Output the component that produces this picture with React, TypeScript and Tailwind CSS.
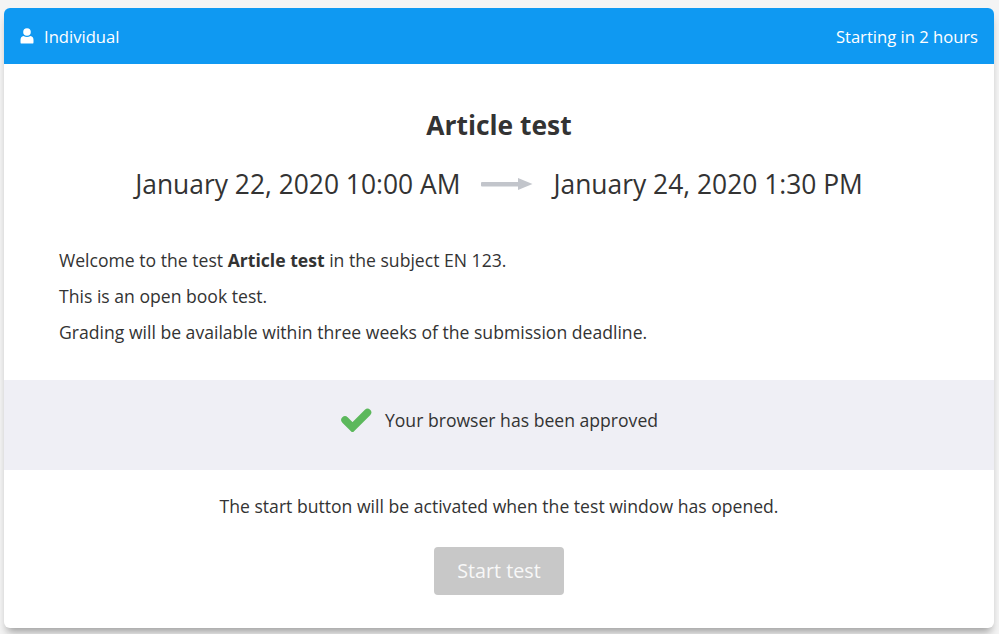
export default function App() {
  return (
    <div className="h-[634px] w-[999px] overflow-hidden bg-[#f4f4f4] pt-2 pl-1 pr-[5px] font-['Open_Sans',sans-serif] text-[#333]">
      <div className="h-[620px] rounded-[6px] bg-white shadow-[0_7px_8px_-3px_rgba(0,0,0,0.35)] flex flex-col">
        <div className="h-14 flex items-center justify-between rounded-t-[6px] bg-[#0f99f2] pl-4 pr-4 pt-[2px] text-[16.6px] text-white">
          <div className="flex items-center gap-[10px]">
            <svg width="14" height="16" viewBox="0 0 14 16" fill="white" className="-mt-[1px]">
              <circle cx="7" cy="4" r="3.8" />
              <path d="M1 15.5 Q0.5 15.5 0.5 14 V12 Q0.5 8.5 3.5 8 Q7 10 10.5 8 Q13.5 8.5 13.5 12 V14 Q13.5 15.5 13 15.5 Z" />
            </svg>
            <span>Individual</span>
          </div>
          <span>Starting in 2 hours</span>
        </div>
        <h1 className="mt-[44px] text-center text-[26.4px] leading-[34px] font-bold">Article test</h1>
        <div className="mt-[23px] flex items-center justify-center gap-5 text-[26.4px] leading-[38px]">
          <span>January 22, 2020 10:00 AM</span>
          <svg width="53" height="12" viewBox="0 0 53 12">
            <rect x="1" y="4" width="38" height="4.5" rx="1" fill="#c2c5cb" />
            <path d="M38 0 L52.5 6 L38 12 Z" fill="#c2c5cb" />
          </svg>
          <span>January 24, 2020 1:30 PM</span>
        </div>
        <div className="mt-[45px] px-[55px] text-[17.6px] leading-[24px] flex flex-col gap-3">
          <p>Welcome to the test <b>Article test</b> in the subject EN 123.</p>
          <p>This is an open book test.</p>
          <p>Grading will be available within three weeks of the submission deadline.</p>
        </div>
        <div className="mt-[36px] h-[90px] pb-[10px] flex items-center justify-center gap-[13px] bg-[#efeff5] text-[17.6px]">
          <svg width="32" height="24" viewBox="0 0 32 24">
            <path d="M5 12 L12.5 19.5 L27.5 4.5" fill="none" stroke="#5cb85c" strokeWidth="7.5" strokeLinecap="round" strokeLinejoin="miter" />
          </svg>
          <span>Your browser has been approved</span>
        </div>
        <p className="mt-[24px] text-center text-[17.6px] leading-[24px]">The start button will be activated when the test window has opened.</p>
        <div className="mt-[29px] flex justify-center">
          <button className="h-12 w-[130px] rounded-[4px] bg-[#c8c8c8] text-[19.7px] text-[#f8f8f8]">Start test</button>
        </div>
      </div>
    </div>
  );
}
